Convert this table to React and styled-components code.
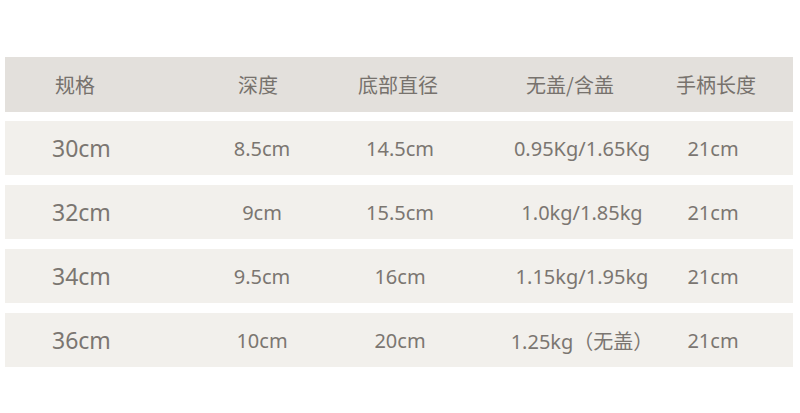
import React from "react";
import styled, { createGlobalStyle } from "styled-components";

const Global = createGlobalStyle`
  html, body { margin: 0; padding: 0; background: #ffffff; }
  body { font-family: "Noto Sans", "Noto Sans CJK SC", sans-serif; }
`;

const Page = styled.div`
  width: 800px;
  height: 413px;
  box-sizing: border-box;
  padding: 57px 7px 0 5px;
  display: flex;
  flex-direction: column;
  gap: 10px;
`;

const HeaderRow = styled.div`
  display: grid;
  grid-template-columns: 188px 130px 150px 194px 98px 1fr;
  align-items: center;
  height: 55px;
  margin-bottom: -1px;
  background: #e3e0dc;
  color: #77726d;
  font-family: "Noto Sans CJK SC", sans-serif;
  font-size: 20px;
`;

const DataRow = styled.div`
  display: grid;
  grid-template-columns: 188px 138px 138px 226px 36px 1fr;
  align-items: center;
  height: 54px;
  background: #f2f0ec;
  color: #7b7671;
  font-size: 20px;
`;

const Cell = styled.div`
  display: flex;
  justify-content: center;
  white-space: nowrap;
  min-width: 0;
`;

const FirstCell = styled.div`
  white-space: nowrap;
  padding-left: ${(p) => p.$pad}px;
  font-size: ${(p) => p.$size}px;
`;

const headers = ["深度", "底部直径", "无盖/含盖", "手柄长度"];

const rows = [
  ["30cm", "8.5cm", "14.5cm", "0.95Kg/1.65Kg", "21cm"],
  ["32cm", "9cm", "15.5cm", "1.0kg/1.85kg", "21cm"],
  ["34cm", "9.5cm", "16cm", "1.15kg/1.95kg", "21cm"],
  ["36cm", "10cm", "20cm", "1.25kg（无盖）", "21cm"],
];

export default function App() {
  return (
    <>
      <Global />
      <Page>
        <HeaderRow>
          <FirstCell $pad={50} $size={20}>规格</FirstCell>
          {headers.map((h) => (
            <Cell key={h}>{h}</Cell>
          ))}
        </HeaderRow>
        {rows.map((r) => (
          <DataRow key={r[0]}>
            <FirstCell $pad={47} $size={23}>{r[0]}</FirstCell>
            {r.slice(1).map((c, j) => (
              <Cell key={j}>{c}</Cell>
            ))}
          </DataRow>
        ))}
      </Page>
    </>
  );
}
